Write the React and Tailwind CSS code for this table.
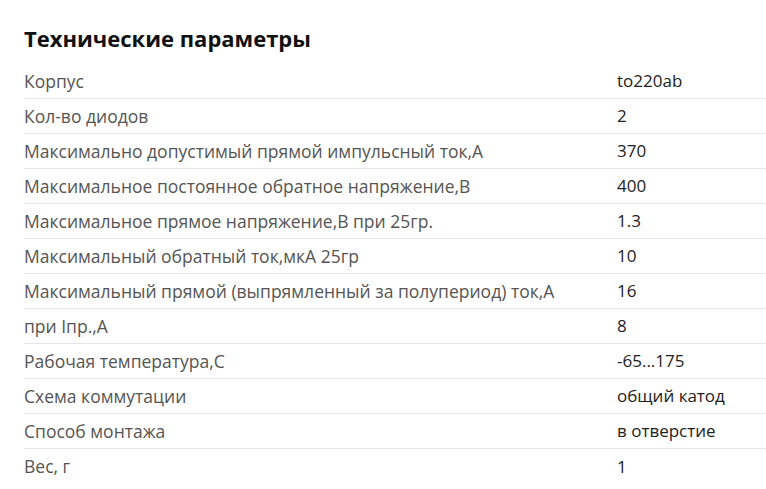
const rows = [
  ["Корпус", "to220ab"],
  ["Кол-во диодов", "2"],
  ["Максимально допустимый прямой импульсный ток,А", "370"],
  ["Максимальное постоянное обратное напряжение,В", "400"],
  ["Максимальное прямое напряжение,В при 25гр.", "1.3"],
  ["Максимальный обратный ток,мкА 25гр", "10"],
  ["Максимальный прямой (выпрямленный за полупериод) ток,А", "16"],
  ["при Iпр.,А", "8"],
  ["Рабочая температура,С", "-65...175"],
  ["Схема коммутации", "общий катод"],
  ["Способ монтажа", "в отверстие"],
  ["Вес, г", "1"],
];

export default function App() {
  return (
    <div className="w-[766px] h-[489px] bg-white pl-6 pt-[23px] overflow-hidden" style={{ fontFamily: '"Open Sans", sans-serif' }}>
      <h2 className="text-[22px] leading-[30px] font-bold text-[#111] mb-[11px]">Технические параметры</h2>
      <div>
        {rows.map(([label, value], i) => (
          <div
            key={i}
            className={`grid grid-cols-[593px_1fr] items-center h-[35px] ${i < rows.length - 1 ? "border-b border-[#e6e6e6]" : ""}`}
          >
            <span className="text-[17.5px] text-[#555]">{label}</span>
            <span className="text-[17px] text-[#222]">{value}</span>
          </div>
        ))}
      </div>
    </div>
  );
}
